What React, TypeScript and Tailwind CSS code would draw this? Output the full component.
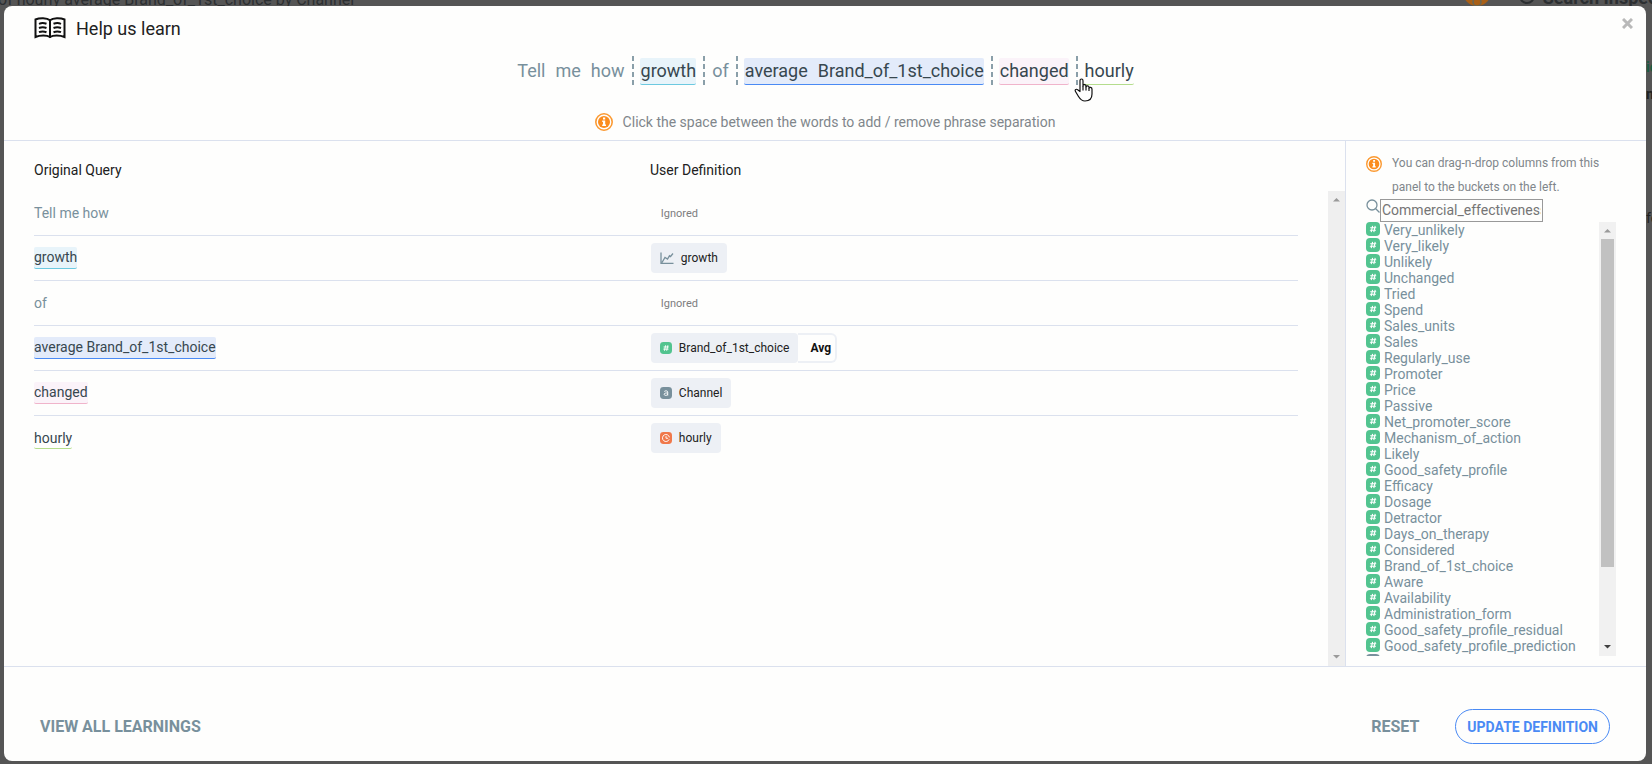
import React from "react";

const COLUMNS = [
  "Very_unlikely", "Very_likely", "Unlikely", "Unchanged", "Tried", "Spend", "Sales_units", "Sales",
  "Regularly_use", "Promoter", "Price", "Passive", "Net_promoter_score", "Mechanism_of_action", "Likely",
  "Good_safety_profile", "Efficacy", "Dosage", "Detractor", "Days_on_therapy", "Considered",
  "Brand_of_1st_choice", "Aware", "Availability", "Administration_form", "Good_safety_profile_residual",
  "Good_safety_profile_prediction",
];

const TONES = {
  plain: "text-[#78909c]",
  cyan: "rounded-xs border-b border-[#6cc9e0] bg-[#e8f4fa] text-[#37474f]",
  blue: "rounded-xs border-b border-[#4a8af4] bg-[#e3ebfa] text-[#37474f]",
  pink: "rounded-xs border-b border-[#f0b4cb] bg-[#fbf3f9] text-[#37474f]",
  green: "rounded-xs border-b border-[#b5dd8d] text-[#37474f]",
};
type Tone = keyof typeof TONES;

const PHRASES: { words: string[]; tone: Tone }[] = [
  { words: ["Tell", "me", "how"], tone: "plain" },
  { words: ["growth"], tone: "cyan" },
  { words: ["of"], tone: "plain" },
  { words: ["average", "Brand_of_1st_choice"], tone: "blue" },
  { words: ["changed"], tone: "pink" },
  { words: ["hourly"], tone: "green" },
];

function BookIcon() {
  return (
    <svg width="32" height="22" viewBox="0 0 32 22" fill="none" stroke="#111" strokeWidth="2">
      <path d="M16 3.2C13 .6 5.500.6 1.500 2.500V20C6 18 13 18 16 20C19 18 26 18 30.500 20V2.500C26.500.6 19 .6 16 3.200V21" />
      <path d="M5 6.800C8 5.500 10 5.800 12.500 6.800M5 11C8 9.700 10 10 12.500 11M5 15.200C8 13.900 10 14.200 12.500 15.200M19.500 6.800C22 5.800 24 5.500 27 6.800M19.500 11C22 10 24 9.700 27 11M19.500 15.200C22 14.200 24 13.900 27 15.200" />
    </svg>
  );
}

function InfoIcon({ className }: { className: string }) {
  return (
    <svg className={className} viewBox="0 0 18 18">
      <circle cx="9" cy="9" r="8.200" fill="none" stroke="#fb9a33" strokeWidth="1.600" />
      <circle cx="9" cy="9" r="6" fill="#fb8c1e" />
      <path d="M8 4.500h2.200v2H8zM7.200 7.500h3v4h.8v1.500H7.200v-1.500H8V9h-.8z" fill="#fff" />
    </svg>
  );
}

function Badge({ kind, className }: { kind: "number" | "text" | "time"; className: string }) {
  const fill = kind === "number" ? "#52c48f" : kind === "text" ? "#78909c" : "#f0784a";
  return (
    <svg className={className} viewBox="0 0 14 14">
      <rect width="14" height="14" rx="4" fill={fill} />
      <g fill="none" stroke="#fff" strokeWidth="1.100">
        {kind === "number" && <path d="M6.600 3.800L5.200 10.200M9.200 3.800L7.800 10.200M4.200 5.800H10.200M3.900 8.300H9.900" />}
        {kind === "text" && <path d="M5 5.200C6 4.200 9 4 9 6V10M9 7C6.500 6.800 4.800 7.200 4.900 8.600C5 10.200 8 10.200 9 8.600" />}
        {kind === "time" && <path d="M10.800 8.500A4.100 4.100 0 1 1 11 6.200M7 4.800V7.300H9.500" />}
      </g>
    </svg>
  );
}

function ChartIcon() {
  return (
    <svg className="h-3 w-[14px]" viewBox="0 0 14 12" fill="none" stroke="#78909c" strokeWidth="1.300">
      <path d="M1 .5V11.300H13.500M2 10.500L5 5.500L7.500 7L9.500 3.800L10.500 4.500L13 1.500" />
    </svg>
  );
}

function HandCursor() {
  return (
    <svg className="pointer-events-none absolute top-[22px] -left-0.5 z-10 h-6 w-[19px]" viewBox="0 0 19 24">
      <path
        d="M6 13.500V2.800C6 .4 9 .4 9 2.800V8V7.500C9.200 6.300 12 6.300 12 8V8.800C12.500 7.300 15 7.500 15 9.300V10C15.500 8.800 18 9.200 18 11.200V16C18 21 15 23 11 23C7.500 23 6 21 4.500 18.500L1.500 13.500C.3 11.500 2.500 10.500 4 12Z"
        fill="#fff" stroke="#111" strokeWidth="1.200" strokeLinejoin="round"
      />
      <path d="M9 8V12.500M12 8.500V12.500M15 10V13" stroke="#111" strokeWidth="1.200" />
    </svg>
  );
}

function Triangle({ up, dark }: { up?: boolean; dark?: boolean }) {
  return (
    <svg className="h-[17px] w-[17px] shrink-0" viewBox="0 0 17 17">
      <path d={up ? "M5 10.500L8.500 7L12 10.500Z" : "M5 6L8.500 9.500L12 6Z"} fill={dark ? "#404040" : "#9a9a9a"} />
    </svg>
  );
}

function Chip({ children }: { children: React.ReactNode }) {
  return <span className="flex h-[30px] items-center gap-[7px] rounded bg-[#edf0f5] px-[9px] text-xs text-[#212121]">{children}</span>;
}

function Ignored() {
  return <span className="pt-0.5 pl-2.5 text-[11px] text-[#7d7d7d]">Ignored</span>;
}

const ROWS: { text: string; tone: Tone; definition: React.ReactNode }[] = [
  { text: "Tell me how", tone: "plain", definition: <Ignored /> },
  { text: "growth", tone: "cyan", definition: <Chip><ChartIcon />growth</Chip> },
  { text: "of", tone: "plain", definition: <Ignored /> },
  {
    text: "average Brand_of_1st_choice",
    tone: "blue",
    definition: (
      <>
        <Chip><Badge kind="number" className="size-3" />Brand_of_1st_choice</Chip>
        <span className="flex h-[30px] items-center rounded-r-md border-2 border-l-0 border-[#edf0f5] pr-1 pl-3 text-xs font-bold text-[#111]">Avg</span>
      </>
    ),
  },
  { text: "changed", tone: "pink", definition: <Chip><Badge kind="text" className="size-3" />Channel</Chip> },
  { text: "hourly", tone: "green", definition: <Chip><Badge kind="time" className="size-3" />hourly</Chip> },
];

export default function App() {
  return (
    <div className="relative h-screen overflow-hidden bg-[#555] pt-1.5 pr-1.5 pb-[3px] pl-1 font-[Roboto,sans-serif]">
      <div className="absolute inset-x-0 top-0 flex h-1.5 items-end justify-between overflow-hidden text-[#2c2f31]">
        <span className="-ml-0.5 text-base leading-3">of hourly average Brand_of_1st_choice by Channel</span>
        <span className="-mr-7 flex items-end gap-7">
          <svg className="size-7" viewBox="0 0 28 28">
            <circle cx="14" cy="14" r="14" fill="#a85f16" />
            <circle cx="14" cy="24" r="4" fill="none" stroke="#665" strokeWidth="1.500" />
          </svg>
          <span className="flex items-end gap-2 text-lg leading-4 font-bold">
            <span className="mb-0.5 size-4 rounded-full border-2 border-[#2c2f31]" />
            Search Inspector
          </span>
        </span>
      </div>
      <div className="absolute top-[57px] right-0 flex w-1.5 flex-col gap-[7px] overflow-hidden text-sm text-[#222]">
        <span className="font-bold text-[#1c5a41]">ic</span>
        <span className="font-bold">n</span>
      </div>
      <div className="absolute top-[208px] right-0 w-1.5 overflow-hidden text-sm text-[#222]">fe</div>

      <div role="dialog" aria-labelledby="title" className="relative flex h-full flex-col overflow-hidden rounded-lg bg-[#fefefd]">
        <header className="relative h-[135px] shrink-0 border-b border-[#dbe1ee]">
          <div className="flex h-11 items-center gap-[10px] pl-[30px]">
            <BookIcon />
            <h1 id="title" className="pt-0.5 text-lg text-[#212121]">Help us learn</h1>
          </div>
          <button aria-label="Close" className="absolute top-[11px] right-3 p-px">
            <svg width="11" height="11" viewBox="0 0 11 11" stroke="#b9b9b9" strokeWidth="3"><path d="M1 1L10 10M10 1L1 10" /></svg>
          </button>
          <div className="flex h-[42px] items-center justify-center text-lg">
            {PHRASES.map((phrase, i) => (
              <React.Fragment key={i}>
                {i > 0 && (
                  <button aria-label="Toggle separation" className="relative mr-1.5 ml-[7px] h-[30px] w-0.5 bg-[repeating-linear-gradient(#8a9fa9_0_5px,transparent_5px_8px)]">
                    {i === 5 && <HandCursor />}
                  </button>
                )}
                <span className={"flex h-[27px] items-center gap-[10px] pl-px " + TONES[phrase.tone]}>
                  {phrase.words.map((word) => <span key={word}>{word}</span>)}
                </span>
              </React.Fragment>
            ))}
          </div>
          <p className="mt-5 flex items-center justify-center gap-2.5 text-sm text-[#80868b]">
            <InfoIcon className="size-[18px]" />
            Click the space between the words to add / remove phrase separation
          </p>
        </header>

        <div className="flex min-h-0 flex-1">
          <main className="flex min-w-0 flex-1 flex-col">
            <div className="flex h-[50px] shrink-0 items-center pt-2 pr-[47px] pl-[30px] text-sm text-[#212121]">
              <span className="w-[calc(50%-16px)]">Original Query</span>
              <span>User Definition</span>
            </div>
            <div className="flex min-h-0 flex-1">
              <table className="ml-[30px] h-fit w-[calc(100%-77px)] table-fixed text-left text-sm">
                <colgroup>
                  <col className="w-[48.8%]" />
                  <col />
                </colgroup>
                <tbody>
                  {ROWS.map((row) => (
                    <tr key={row.text} className="h-[45px] border-b border-[#dbe1ee] first:h-11 last:h-[46px] last:border-0">
                      <td className="p-0"><span className={"inline-flex h-[22px] items-center " + TONES[row.tone]}>{row.text}</span></td>
                      <td className="p-0"><div className="flex items-center">{row.definition}</div></td>
                    </tr>
                  ))}
                </tbody>
              </table>
              <div className="ml-auto flex w-[17px] flex-col justify-between bg-[#efefef]">
                <Triangle up />
                <Triangle />
              </div>
            </div>
          </main>

          <aside className="flex w-[301px] shrink-0 flex-col border-l border-[#dbe1ee] pt-[10px] pr-[30px] pb-[10px] pl-5">
            <div className="flex gap-2.5 text-xs leading-6 text-[#80868b]">
              <InfoIcon className="mt-[5px] size-4 shrink-0" />
              <p>You can drag-n-drop columns from this panel to the buckets on the left.</p>
            </div>
            <label className="flex h-[23px] shrink-0">
              <svg className="size-[14px] shrink-0" viewBox="0 0 14 14" fill="none" stroke="#78909c" strokeWidth="1.300"><circle cx="6" cy="6" r="5" /><path d="M9.500 9.500L13.500 13.500" /></svg>
              <input aria-label="Search columns" placeholder="Commercial_effectiveness" className="h-[23px] w-[163px] border border-[#999] px-px pb-px text-sm placeholder:text-[#757575]" />
            </label>
            <div className="flex min-h-0 flex-1">
              <ul className="flex-1 overflow-hidden text-sm leading-4 text-[#78909c]">
                {COLUMNS.map((name) => (
                  <li key={name} className="flex h-4 gap-1">
                    <Badge kind="number" className="size-[14px] shrink-0" />
                    {name}
                  </li>
                ))}
                <li><Badge kind="text" className="size-[14px]" /></li>
              </ul>
              <div className="flex w-[17px] shrink-0 flex-col items-center bg-[#f1f1f1]">
                <Triangle up />
                <div className="w-[13px] flex-[328] bg-[#c1c1c1]" />
                <div className="flex-[72]" />
                <Triangle dark />
              </div>
            </div>
          </aside>
        </div>

        <footer className="flex h-[95px] shrink-0 items-center border-t border-[#dbe1ee] px-9 pt-[25px] text-base font-bold text-[#78909c]">
          <button>VIEW ALL LEARNINGS</button>
          <button className="ml-auto">RESET</button>
          <button className="ml-9 h-[35px] rounded-full border border-[#4a8af4] px-[11px] text-sm text-[#4a8af4]">UPDATE DEFINITION</button>
        </footer>
      </div>
    </div>
  );
}
